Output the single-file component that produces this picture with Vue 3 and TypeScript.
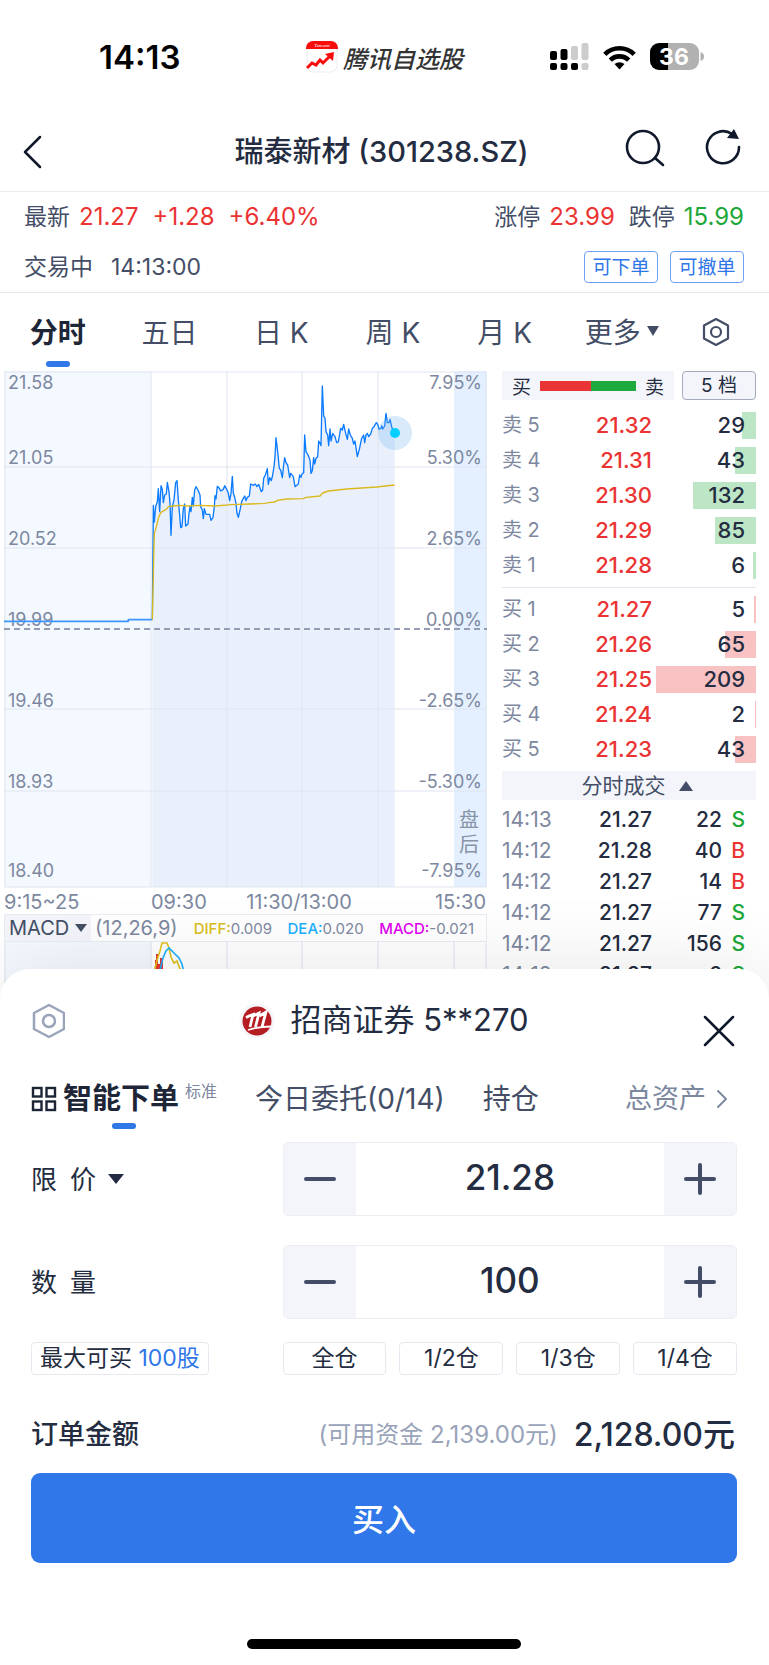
<script setup lang="ts">
import { ref } from 'vue'

interface Level { label: string; price: string; volume: number }
interface Trade { time: string; price: string; volume: number; side: 'S' | 'B' }

const maxVolume = 209

const book: { key: string; name: string; levels: Level[] }[] = [
  {
    key: 'sell',
    name: '卖盘',
    levels: [
      { label: '卖 5', price: '21.32', volume: 29 },
      { label: '卖 4', price: '21.31', volume: 43 },
      { label: '卖 3', price: '21.30', volume: 132 },
      { label: '卖 2', price: '21.29', volume: 85 },
      { label: '卖 1', price: '21.28', volume: 6 },
    ],
  },
  {
    key: 'buy',
    name: '买盘',
    levels: [
      { label: '买 1', price: '21.27', volume: 5 },
      { label: '买 2', price: '21.26', volume: 65 },
      { label: '买 3', price: '21.25', volume: 209 },
      { label: '买 4', price: '21.24', volume: 2 },
      { label: '买 5', price: '21.23', volume: 43 },
    ],
  },
]

const trades: Trade[] = [
  { time: '14:13', price: '21.27', volume: 22, side: 'S' },
  { time: '14:12', price: '21.28', volume: 40, side: 'B' },
  { time: '14:12', price: '21.27', volume: 14, side: 'B' },
  { time: '14:12', price: '21.27', volume: 77, side: 'S' },
  { time: '14:12', price: '21.27', volume: 156, side: 'S' },
  { time: '14:12', price: '21.27', volume: 6, side: 'S' },
]

const barWidth = (volume: number): string => `${(volume / maxVolume) * 96}%`

const periods = ['分时', '五日', '日 K', '周 K', '月 K']
const activePeriod = ref('分时')

const ticks = [
  { y: 18, price: '21.58', change: '7.95%' },
  { y: 93, price: '21.05', change: '5.30%' },
  { y: 174, price: '20.52', change: '2.65%' },
  { y: 255, price: '19.99', change: '0.00%' },
  { y: 336, price: '19.46', change: '-2.65%' },
  { y: 417, price: '18.93', change: '-5.30%' },
  { y: 506, price: '18.40', change: '-7.95%' },
]
const gridRows = [96, 177, 338, 420]
const gridCols = [147, 223, 298, 374, 450]

// Series are stored at three units per chart pixel.
const priceLine =
  '457,779 460,436 463,486 467,440 472,425 475,386 479,455 483,377 487,388 490,428 494,405 499,402 502,367 507,395 510,430 513,526 517,440 522,420 527,368 531,362 535,420 538,455 542,503 546,500 550,445 554,432 557,498 564,492 567,460 570,440 573,455 577,412 580,438 584,390 588,380 594,390 600,405 602,440 607,450 610,476 613,446 618,463 629,463 633,481 639,472 643,440 645,407 648,417 652,379 658,385 662,393 670,388 674,377 680,388 685,400 689,422 693,400 697,349 700,400 704,412 708,430 711,460 715,472 720,450 725,425 730,415 734,408 738,422 742,412 748,408 752,372 760,376 766,372 771,380 776,373 784,395 788,390 791,355 796,345 802,326 805,373 809,353 814,362 818,345 822,320 825,290 828,233 833,275 838,325 842,330 847,353 851,315 854,293 858,308 863,315 869,353 872,340 880,350 885,380 895,372 899,345 903,352 906,342 911,338 914,225 918,275 924,285 930,300 933,340 937,332 941,293 944,312 948,295 953,290 956,243 960,250 963,257 967,78 971,168 975,175 978,215 983,225 986,257 990,207 993,243 998,220 1005,230 1010,248 1015,246 1022,205 1027,210 1031,193 1037,220 1042,238 1046,207 1051,225 1057,235 1061,252 1065,243 1072,290 1078,268 1085,235 1091,225 1094,248 1098,225 1102,220 1106,230 1112,222 1117,205 1122,200 1129,188 1133,193 1137,207 1143,205 1145,197 1148,207 1154,198 1158,160 1162,188 1167,188 1170,178 1175,200 1179,212 1184,220'
const averageLine =
  '457,779 460,640 463,520 469,500 475,475 482,458 492,452 500,447 505,440 520,438 538,436 560,438 600,436 645,438 695,434 750,432 795,430 805,428 825,426 832,421 860,417 910,416 918,412 960,408 968,399 985,393 1040,387 1130,381 1184,375'

const price = ref('21.28')
const quantity = ref('100')
const orderType = ref('limit')
const indicator = ref('MACD')

const changePrice = (step: number): void => {
  price.value = (Number(price.value) + step).toFixed(2)
}
const changeQuantity = (step: number): void => {
  quantity.value = String(Math.max(0, Number(quantity.value) + step))
}
const portions = ['全仓', '1/2仓', '1/3仓', '1/4仓']
</script>

<template>
  <div class="page">
    <div class="status">
      <div class="status-time">14:13</div>
      <div class="status-app">
        <svg width="32" height="32" viewBox="0 0 32 32" aria-hidden="true">
          <rect x="1" y="1" width="30" height="30" rx="6" fill="#fff" stroke="#eee" />
          <path d="M0 8V7a7 7 0 0 1 7-7h18a7 7 0 0 1 7 7v1z" fill="#f80d0d" />
          <text x="16" y="6" font-size="5" fill="#fff" text-anchor="middle" font-family="Liberation Serif, serif">Tencent</text>
          <path d="M1 27l5-5 4 2 4-5 3 3 8-8" fill="none" stroke="#f80d0d" stroke-width="3" />
          <path d="M19 13l9-2-1 9z" fill="#f80d0d" />
        </svg>
        <span>腾讯自选股</span>
      </div>
      <div class="status-icons">
        <svg width="39" height="28" viewBox="0 0 39 28" aria-hidden="true">
          <g fill="#000">
            <rect x="0" y="8" width="7" height="9" rx="2" /><rect x="10.500" y="6" width="7" height="11" rx="2" />
            <rect x="0" y="20" width="7" height="7" rx="2" /><rect x="10.500" y="20" width="7" height="7" rx="2" /><rect x="21" y="20" width="7" height="7" rx="2" />
          </g>
          <g fill="#ccc">
            <rect x="21" y="3" width="7" height="14" rx="2" /><rect x="31.500" y="0" width="7" height="17" rx="2" /><rect x="31.500" y="20" width="7" height="7" rx="2" />
          </g>
        </svg>
        <svg width="33" height="25" viewBox="0 0 33 25" aria-hidden="true">
          <g fill="none" stroke="#000" stroke-width="4.600">
            <path d="M1.800 9.300a21 21 0 0 1 29.400 0" />
            <path d="M7.300 15.200a13 13 0 0 1 18.400 0" />
          </g>
          <path d="M16.500 24.500l-5-5.400a7.500 7.500 0 0 1 10 0z" />
        </svg>
        <svg width="54" height="28" viewBox="0 0 54 28" aria-hidden="true">
          <path d="M18 0H9a9 9 0 0 0-9 9v9a9 9 0 0 0 9 9h9z" />
          <path d="M18 0h22a9 9 0 0 1 9 9v9a9 9 0 0 1-9 9H18z" fill="#b1b1b1" />
          <path d="M50.500 9q3.500 1 3.500 4.500T50.500 18z" fill="#b1b1b1" />
          <text x="24" y="22" font-size="23" font-weight="700" fill="#fff" text-anchor="middle">36</text>
        </svg>
      </div>
    </div>

    <header class="titlebar">
      <button class="icon-btn" aria-label="返回">
        <svg width="22" height="36" viewBox="0 0 22 36"><path d="M19 3L4 18l15 15" fill="none" stroke="#10182b" stroke-width="2.500" stroke-linecap="round" stroke-linejoin="round" /></svg>
      </button>
      <h1>瑞泰新材 (301238.SZ)</h1>
      <div class="title-actions">
        <button class="icon-btn" aria-label="搜索">
          <svg width="42" height="40" viewBox="0 0 42 40"><g fill="none" stroke="#10182b" stroke-width="2.600" stroke-linecap="round"><circle cx="19" cy="19" r="16" /><path d="M31 30l8 7" /></g></svg>
        </button>
        <button class="icon-btn" aria-label="刷新">
          <svg width="38" height="40" viewBox="0 0 38 40"><path d="M35 19a16 16 0 1 1-7-13" fill="none" stroke="#10182b" stroke-width="2.600" stroke-linecap="round" /><path d="M30 1l5 10-12-1z" fill="#10182b" /></svg>
        </button>
      </div>
    </header>

    <section class="quote">
      <div class="quote-row">
        <div class="quote-items">
          <span>最新</span><span class="up">21.27</span><span class="up wide">+1.28</span><span class="up wide">+6.40%</span>
        </div>
        <div class="quote-items">
          <span>涨停</span><span class="up">23.99</span><span class="wide">跌停</span><span class="down">15.99</span>
        </div>
      </div>
      <div class="quote-row">
        <div class="quote-state"><span>交易中</span><span>14:13:00</span></div>
        <div class="quote-tags"><button>可下单</button><button>可撤单</button></div>
      </div>
    </section>

    <nav class="periods">
      <button v-for="p in periods" :key="p" :class="{ active: p === activePeriod }" @click="activePeriod = p">{{ p }}</button>
      <button class="more">更多<svg width="14" height="12" viewBox="0 0 14 12" aria-hidden="true"><path d="M1 1h12L7 11z" fill="#434e66" /></svg></button>
      <button class="gear" aria-label="图表设置">
        <svg width="28" height="30" viewBox="0 0 28 30"><g fill="none" stroke="#434e66" stroke-width="2.200" stroke-linejoin="round"><path d="M14 2l12 6.500v13L14 28 2 21.500v-13z" /><circle cx="14" cy="15" r="5" /></g></svg>
      </button>
    </nav>

    <main class="market">
      <div class="charts">
        <svg class="chart" viewBox="0 0 484 543" role="img" aria-label="分时走势图">
          <rect x="0" y="0" width="147" height="516" fill="#f4f8ff" />
          <rect x="450" y="0" width="33" height="516" fill="#e4f0ff" />
          <g transform="translate(-4 -11) scale(.333333)">
            <polygon :points="`${priceLine} 1184,1580 457,1580`" fill="#e9f0fc" />
          </g>
          <g stroke="#dfe5f0" stroke-opacity=".7" stroke-width="1.500">
            <line v-for="y in gridRows" :key="y" x1="0" x2="483" :y1="y" :y2="y" />
            <line v-for="x in gridCols.slice(0, 4)" :key="x" :x1="x" :x2="x" y1="0" y2="516" />
            <rect x="1" y="1" width="481" height="515" fill="none" />
          </g>
          <line x1="0" x2="483" y1="258" y2="258" stroke="#949db3" stroke-width="2" stroke-dasharray="6 4" />
          <g class="tick-text">
            <text v-for="t in ticks" :key="t.price" x="4" :y="t.y">{{ t.price }}</text>
            <text v-for="t in ticks" :key="t.change" x="478" :y="t.y" text-anchor="end">{{ t.change }}</text>
          </g>
          <g class="after-text"><text x="455" y="456">盘</text><text x="455" y="481">后</text></g>
          <g transform="translate(-4 -11) scale(.333333)" fill="none" stroke-linejoin="round">
            <polyline points="12,784 385,784 385,779 457,779" stroke="#3c96ff" stroke-width="5" />
            <polyline :points="priceLine" stroke="#0b7bff" stroke-width="4" />
            <polyline :points="averageLine" stroke="#d9b91c" stroke-width="4" />
          </g>
          <circle cx="391" cy="62" r="17" fill="#69aaf0" fill-opacity=".25" />
          <circle cx="391" cy="62" r="5" fill="#00cfff" />
          <g class="time-text">
            <text x="0" y="538">9:15~25</text>
            <text x="147" y="538">09:30</text>
            <text x="295" y="538" text-anchor="middle">11:30/13:00</text>
            <text x="482" y="538" text-anchor="end">15:30</text>
          </g>
        </svg>
        <div class="macd-bar">
          <div class="macd-pick">
            <select v-model="indicator" aria-label="指标"><option value="MACD">MACD</option></select>
            <svg width="12" height="10" viewBox="0 0 12 10" aria-hidden="true"><path d="M0 1h12L6 9z" fill="#434e66" /></svg>
          </div>
          <span class="macd-params">(12,26,9)</span>
          <div class="macd-values">
            <span><b class="diff">DIFF:</b>0.009</span><span><b class="dea">DEA:</b>0.020</span><span><b class="macd">MACD:</b>-0.021</span>
          </div>
        </div>
        <svg class="chart" viewBox="0 0 484 58" role="img" aria-label="MACD 指标图">
          <rect width="147" height="58" fill="#f4f8ff" />
          <g stroke="#dfe5f0" stroke-opacity=".7" stroke-width="1.500">
            <line v-for="x in gridCols" :key="x" :x1="x" :x2="x" y1="0" y2="58" />
            <path d="M1 0v58M482 0v58" />
          </g>
          <path d="M151 58V18h1V12h2v10h2v-6h2v4h1v38z" fill="#e8352e" />
          <polyline points="150,42 151,26 154,15 156,9 158,1 163,1 165,6 167,15 170,21 173,19 176,27 180,50" fill="none" stroke="#e0c21b" stroke-width="1.600" />
          <polyline points="155,32 159,16 162,9 165,6 170,11 175,16 178,22 182,40" fill="none" stroke="#1ab0ff" stroke-width="1.600" />
        </svg>
      </div>

      <aside class="book">
        <div class="book-head">
          <div class="ratio"><span>买</span><i class="ratio-bar"></i><span>卖</span></div>
          <button>5 档</button>
        </div>
        <table v-for="group in book" :key="group.key" class="levels" :class="group.key" :aria-label="group.name">
          <tbody>
            <tr v-for="level in group.levels" :key="level.label">
              <th scope="row">{{ level.label }}</th>
              <td class="price">{{ level.price }}</td>
              <td class="volume"><i class="bar" :style="{ width: barWidth(level.volume) }"></i><span>{{ level.volume }}</span></td>
            </tr>
          </tbody>
        </table>
        <button class="trades-head">分时成交<svg width="14" height="10" viewBox="0 0 14 10" aria-hidden="true"><path d="M0 10h14L7 0z" fill="#434e66" /></svg></button>
        <table class="trades" aria-label="分时成交">
          <tbody>
            <tr v-for="(t, i) in trades" :key="i">
              <th scope="row">{{ t.time }}</th>
              <td class="trade-price">{{ t.price }}</td>
              <td class="trade-volume">{{ t.volume }}</td>
              <td class="trade-side" :class="t.side === 'S' ? 'down' : 'up'">{{ t.side }}</td>
            </tr>
          </tbody>
        </table>
      </aside>
    </main>

    <section class="sheet">
      <div class="sheet-head">
        <button class="icon-btn" aria-label="交易设置">
          <svg width="34" height="36" viewBox="0 0 34 36"><g fill="none" stroke="#99a3b9" stroke-width="2.500" stroke-linejoin="round"><path d="M18 2l15 8v16l-15 8-15-8V10z" /><circle cx="18" cy="18" r="6" /></g></svg>
        </button>
        <h2>
          <svg width="36" height="36" viewBox="0 0 36 36" aria-hidden="true">
            <circle cx="18" cy="18" r="17.500" fill="#f5f6fa" /><circle cx="18" cy="18" r="14.500" fill="#b51d22" />
            <g fill="none" stroke="#fff" stroke-width="2.800">
              <path d="M7 14.500l3-1.500 4-1.500-3 12.500M14 13l6-3-3.500 14M20.500 13l6.500-4-4 15" />
              <path d="M9 27q11-3.500 23-3.500" stroke-width="1.800" />
            </g>
          </svg>
          <span>招商证券 5**270</span>
        </h2>
        <button class="icon-btn close" aria-label="关闭">
          <svg width="32" height="32" viewBox="0 0 32 32"><path d="M2 2l28 28M30 2L2 30" stroke="#10182b" stroke-width="2.500" stroke-linecap="round" /></svg>
        </button>
      </div>

      <nav class="sheet-tabs">
        <button class="tab active">
          <svg width="26" height="26" viewBox="0 0 26 26" aria-hidden="true"><g fill="none" stroke="#1d2537" stroke-width="2.400"><rect x="2" y="2" width="8.500" height="8.500" /><rect x="15.500" y="2" width="8.500" height="8.500" /><rect x="2" y="15.500" width="8.500" height="8.500" /><rect x="15.500" y="15.500" width="8.500" height="8.500" /></g></svg>
          <span>智能下单</span><small>标准</small>
        </button>
        <button class="tab">今日委托(0/14)</button>
        <button class="tab">持仓</button>
        <button class="tab assets">总资产<svg width="12" height="20" viewBox="0 0 12 20" aria-hidden="true"><path d="M2 2l8 8-8 8" fill="none" stroke="#7d889f" stroke-width="2" stroke-linecap="round" stroke-linejoin="round" /></svg></button>
      </nav>

      <form class="order" @submit.prevent>
        <div class="field">
          <div class="type-pick">
            <select v-model="orderType" aria-label="委托类型"><option value="limit">限&#8194;价</option></select>
            <svg width="16" height="10" viewBox="0 0 16 10" aria-hidden="true"><path d="M0 0h16L8 10z" fill="#232c40" /></svg>
          </div>
          <div class="stepper">
            <button type="button" aria-label="降低价格" @click="changePrice(-0.01)"><svg width="32" height="32" viewBox="0 0 32 32"><path d="M2 16h28" /></svg></button>
            <input v-model="price" aria-label="价格" inputmode="decimal" />
            <button type="button" aria-label="提高价格" @click="changePrice(0.01)"><svg width="32" height="32" viewBox="0 0 32 32"><path d="M2 16h28M16 2v28" /></svg></button>
          </div>
        </div>
        <div class="field">
          <label for="qty">数&#8194;量</label>
          <div class="stepper">
            <button type="button" aria-label="减少数量" @click="changeQuantity(-100)"><svg width="32" height="32" viewBox="0 0 32 32"><path d="M2 16h28" /></svg></button>
            <input id="qty" v-model="quantity" inputmode="numeric" />
            <button type="button" aria-label="增加数量" @click="changeQuantity(100)"><svg width="32" height="32" viewBox="0 0 32 32"><path d="M2 16h28M16 2v28" /></svg></button>
          </div>
        </div>
        <div class="field portions-row">
          <div><button type="button" class="max">最大可买 <em>100股</em></button></div>
          <div class="portions"><button v-for="p in portions" :key="p" type="button">{{ p }}</button></div>
        </div>
        <div class="total">
          <strong>订单金额</strong>
          <span class="funds">(可用资金 2,139.00元)</span>
          <strong class="amount">2,128.00元</strong>
        </div>
        <button class="submit" type="submit">买入</button>
      </form>
      <div class="home"></div>
    </section>
  </div>
</template>

<style>
body {
  margin: 0;
  background: #fff;
}
</style>

<style scoped>
.page {
  min-height: 100vh;
  display: flex;
  flex-direction: column;
  overflow: hidden;
  background: #fff;
  color: #434e66;
  font-family: Inter, 'Noto Sans CJK SC', sans-serif;
}
.page * { box-sizing: border-box; }
button, input, select {
  margin: 0;
  padding: 0;
  border: 0;
  border-radius: 0;
  outline: 0;
  background: none;
  color: inherit;
  font: inherit;
  appearance: none;
}
button { cursor: pointer; }
svg { display: block; flex: none; }
.up { color: #ea3332; }
.down { color: #1da83a; }
.icon-btn { display: flex; }

.status {
  height: 112px;
  display: grid;
  grid-template-columns: 1fr auto 1fr;
  align-items: center;
  padding: 2px 65px 0;
}
.status-time { padding-left: 34px; font-size: 33px; font-weight: 600; color: #000; }
.status-app {
  display: flex;
  align-items: center;
  gap: 5px;
  color: #333;
  font-size: 24px;
  font-weight: 500;
  font-style: italic;
}
.status-icons { display: flex; align-items: center; justify-content: flex-end; gap: 14px; }

.titlebar {
  height: 80px;
  display: grid;
  grid-template-columns: 1fr auto 1fr;
  align-items: center;
  padding: 0 27px 0 21px;
  border-bottom: 1px solid #e8eaed;
}
h1 { margin: 0; font-size: 29px; font-weight: 500; line-height: 40px; color: #232c40; }
.title-actions { display: flex; justify-content: flex-end; gap: 38px; padding-bottom: 8px; }

.quote {
  height: 101px;
  padding: 0 25px 0 24px;
  border-bottom: 1px solid #e4e6ec;
  font-size: 23px;
  line-height: 32px;
}
.quote-row { height: 50px; display: flex; align-items: center; justify-content: space-between; }
.quote-items { display: flex; align-items: baseline; gap: 9px; }
.quote-items .up, .quote-items .down { font-size: 24px; }
.quote-items .wide { margin-left: 5px; }
.quote-state { display: flex; align-items: baseline; gap: 18px; }
.quote-tags { display: flex; gap: 12px; }
.quote-tags button {
  width: 74px;
  height: 32px;
  border: 1px solid #6ea0f3;
  border-radius: 4px;
  color: #2f76e8;
  font-size: 19px;
  line-height: 29px;
}

.periods {
  height: 78px;
  display: grid;
  grid-template-columns: repeat(5, 112fr) 124fr 64fr;
  align-items: stretch;
  padding: 0 21px 0 2px;
  font-size: 28px;
}
.periods button { position: relative; display: flex; align-items: center; justify-content: center; padding-bottom: 3px; }
.periods .gear { padding-bottom: 0; }
.periods .active { color: #1d2537; font-weight: 700; }
.periods .active::after,
.tab.active::after {
  content: '';
  position: absolute;
  left: 50%;
  bottom: 4px;
  width: 24px;
  height: 6px;
  margin-left: -12px;
  border-radius: 3px;
  background: #3077e8;
}
.periods .more { gap: 5px; }

.market {
  display: grid;
  grid-template-columns: 484fr 254fr;
  align-items: start;
  gap: 14px;
  padding: 0 13px 0 4px;
}
.chart { width: 100%; height: auto; }
.tick-text { font-size: 18px; fill: #7d889f; }
.after-text { font-size: 20px; fill: #8793a6; }
.time-text { font-size: 20px; fill: #7d889f; }
.macd-bar {
  height: 28px;
  display: flex;
  align-items: center;
  margin-right: 1px;
  border: 1px solid #e9ecf3;
  color: #7d889f;
}
.macd-pick {
  align-self: stretch;
  display: flex;
  align-items: center;
  gap: 5px;
  padding: 0 4px;
  background: #f3f5fa;
  color: #434e66;
  font-size: 20px;
}
.macd-params { padding-left: 4px; font-size: 20px; }
.macd-values {
  flex: 1;
  display: flex;
  justify-content: space-between;
  padding: 0 12px 0 16px;
  font-size: 15px;
}
.macd-values b { font-weight: 500; }
.diff { color: #d9bd20; }
.dea { color: #1ab0ff; }
.macd { color: #e000f0; }

.book-head { display: flex; gap: 8px; height: 29px; margin-bottom: 8px; color: #232c40; font-size: 19px; }
.ratio { flex: 1; display: flex; align-items: center; gap: 9px; padding: 0 10px; background: #f4f5fa; }
.ratio-bar { flex: 1; height: 10px; background: linear-gradient(to right, #e93535 53%, #1eaa3e 53%); }
.book-head button {
  width: 74px;
  border: 1px solid #a3abbd;
  border-radius: 4px;
  background: #f4f5fa;
  line-height: 27px;
}
table { width: 100%; border-collapse: collapse; table-layout: fixed; }
th, td { padding: 0; text-align: right; }
th { color: #7d889f; font-weight: 400; text-align: left; }
.levels { font-size: 22px; font-weight: 500; line-height: 27px; }
.levels tr { height: 35px; }
.levels th { width: 60px; font-size: 20px; }
.price { width: 90px; color: #ea3332; }
.volume { position: relative; padding-right: 11px; color: #232c40; }
.volume span { position: relative; }
.bar { position: absolute; right: 0; top: 4px; height: 27px; background: #bce6c5; }
.buy .bar { background: #f8c1c2; }
.sell { margin-bottom: 4px; }
.buy { border-top: 1px solid #e1e5ee; border-collapse: separate; border-spacing: 0; padding-top: 4px; }
.trades-head {
  width: 100%;
  height: 29px;
  display: flex;
  align-items: center;
  justify-content: center;
  gap: 13px;
  margin: 4px 0;
  padding-left: 16px;
  background: #f4f5fa;
  font-size: 21px;
  line-height: 29px;
}
.trades { font-size: 21px; font-weight: 500; line-height: 26px; color: #232c40; }
.trades tr { height: 31px; }
.trades th { width: 60px; }
.trade-price { width: 90px; }
.trade-volume { width: 70px; }
.trade-side { padding-right: 11px; }

.sheet {
  position: relative;
  z-index: 1;
  flex: 1;
  display: flex;
  flex-direction: column;
  margin-top: -31px;
  padding: 0 32px 0 31px;
  border-radius: 30px 30px 0 0;
  background: #fff;
  box-shadow: 0 0 80px rgba(0, 0, 0, 0.1);
}
.sheet-head {
  height: 104px;
  display: grid;
  grid-template-columns: 1fr auto 1fr;
  align-items: center;
}
h2 {
  margin: 0;
  display: flex;
  align-items: center;
  gap: 15px;
  color: #232c40;
  font-size: 31px;
  font-weight: 400;
  line-height: 40px;
}
h2 span { padding-bottom: 3px; }
.close { justify-self: end; padding: 20px 2px 0 0; }
.sheet-tabs { height: 60px; display: flex; gap: 38px; font-size: 28px; line-height: 40px; }
.tab { position: relative; display: flex; align-items: center; padding-bottom: 8px; }
.tab.active { gap: 6px; color: #1d2537; font-size: 29px; font-weight: 700; }
.tab small { align-self: flex-start; padding-top: 6px; color: #7d889f; font-size: 16px; font-weight: 400; line-height: 24px; }
.assets { gap: 10px; margin-left: auto; padding-right: 9px; color: #7d889f; font-size: 27px; }

.order { display: flex; flex-direction: column; padding-top: 9px; }
.field {
  display: grid;
  grid-template-columns: 252fr 455fr;
  align-items: center;
  margin-bottom: 29px;
  color: #232c40;
  font-size: 26px;
}
.field label { padding-bottom: 3px; }
.type-pick { display: flex; align-items: center; gap: 11px; }
.stepper {
  height: 74px;
  display: flex;
  border: 1px solid #eceef4;
  border-radius: 5px;
  overflow: hidden;
}
.stepper button { width: 72px; display: flex; align-items: center; justify-content: center; background: #f4f5fa; }
.stepper path { stroke: #434e66; stroke-width: 4; stroke-linecap: round; }
.stepper input {
  flex: 1;
  min-width: 0;
  padding-bottom: 4px;
  font-size: 35px;
  font-weight: 500;
  text-align: center;
}
.portions-row { margin: -6px 0 0; font-size: 23px; }
.portions { display: grid; grid-template-columns: repeat(4, 1fr); gap: 13px; }
.portions button, .max {
  height: 33px;
  border: 1px solid #e6e9f0;
  border-radius: 4px;
  color: #232c40;
  font-size: 23px;
  line-height: 29px;
}
.max { padding: 0 8px; }
.max em { color: #2f76e8; font-style: normal; }
.total { height: 98px; display: flex; align-items: center; padding: 16px 2px 0 0; color: #232c40; }
.total strong { font-size: 27px; font-weight: 500; }
.total .funds { margin-left: auto; color: #99a3b9; font-size: 24px; }
.total .amount { margin-left: 16px; font-size: 32px; }
.submit {
  height: 90px;
  padding-bottom: 2px;
  border-radius: 9px;
  background: #3077ea;
  color: #fff;
  font-size: 32px;
  font-weight: 500;
}
.home { width: 274px; height: 10px; margin: auto auto 16px; border-radius: 5px; background: #000; }
</style>
